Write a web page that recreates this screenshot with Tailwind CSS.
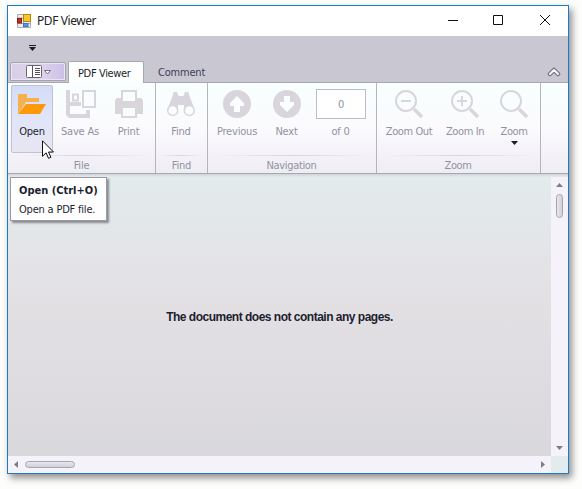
<!DOCTYPE html>
<html lang="en">
<head>
<meta charset="utf-8">
<title>PDF Viewer</title>
<script src="https://cdn.jsdelivr.net/npm/@tailwindcss/browser@4"></script>
</head>
<body class="w-[582px] h-[489px] overflow-hidden bg-[#fdfefc] font-['DejaVu_Sans_Condensed','DejaVu_Sans',sans-serif] text-[11px] leading-[14px] tracking-[-0.2px] text-[#1d1e30]">
<main class="relative ml-[7px] mt-[5px] w-[562px] h-[469px] border border-[#1c7acb] bg-[#c9c7d2] shadow-[3px_4px_7px_#00000070] flex flex-col">
  <!-- Title bar -->
  <header class="h-[30px] shrink-0 bg-[#fefffe] flex items-center pl-[9px]">
    <svg class="w-[14px] h-[14px] shrink-0" viewBox="0 0 14 14"><path d="M.5.5h13v13H.5zM6.500.5v13M.5 4h6M.5 9.500h13" fill="#eee" stroke="#aaa"/><rect x="6.500" y=".5" width="7" height="7" fill="#f7c52c" stroke="#b8860b"/><rect x=".5" y="4.500" width="4" height="4.500" fill="#c42b22" stroke="#8e1d15"/><rect x="6.500" y="9.500" width="4.500" height="3" fill="#5897ed" stroke="#3475cf"/></svg>
    <h1 class="ml-[6px] text-[12px] leading-[16px] font-['Noto_Sans',sans-serif] font-normal tracking-[-0.42px] text-[#222]">PDF Viewer</h1>
    <svg class="ml-auto mr-[17px] -mt-[2px] w-[104px] h-[12px] shrink-0" viewBox="0 0 104 12" fill="none" stroke="#111"><path d="M1 6.500h10M46.500 1.500h9v9h-9zM93 1l10 10M103 1L93 11"/></svg>
  </header>
  <!-- Quick access toolbar -->
  <div class="h-[25px] shrink-0 flex items-start pl-[21px] pt-[9px]">
    <svg class="w-[7px] h-[6px]" viewBox="0 0 7 6" fill="#1b1b2b"><path d="M0 0h7v1H0zM0 2h7L3.500 6z"/></svg>
  </div>
  <!-- Tabs -->
  <nav class="h-[22px] shrink-0 border-b border-[#a8a6b1] flex items-end">
    <div class="ml-[2px] mb-px w-[56px] h-[19px] border border-[#a7a1b5] rounded-t-[2px] bg-linear-to-r from-[#d8cee5] via-[#e1d6ed] to-[#ccbfe8] shadow-[inset_0_0_0_1px_#eae5f2] flex items-center pl-[15px]">
      <svg class="w-[26px] h-[13px]" viewBox="0 0 26 13" fill="none"><rect x=".5" y=".5" width="15" height="12" rx="1" fill="#fff" stroke="#68656f"/><path d="M6.500 1v11M9 3.500h5M9 5.500h5M9 7.500h5M9 9.500h5" stroke="#55515e"/><path d="M18.500 5.500h6l-3 3.500z" fill="#fff" stroke="#77728a"/></svg>
    </div>
    <div class="ml-[2px] -mb-px w-[76px] h-[22px] border border-b-0 border-[#a8a6b1] rounded-t-[2px] bg-[#fdfefe] flex items-center pl-[9px] pt-[2px]"><span class="tracking-[-0.35px] whitespace-nowrap">PDF Viewer</span></div>
    <div class="w-[74px] h-[21px] flex items-center pl-[14px] pt-[3px] text-[#3f4054]"><span class="tracking-[-0.2px]">Comment</span></div>
    <svg class="ml-auto mr-[7px] mb-[5px] w-[14px] h-[10px]" viewBox="0 0 14 10" fill="none" stroke-linecap="round" stroke-linejoin="round"><path d="M3 7l4-4 4 4" stroke="#777483" stroke-width="4.500"/><path d="M3 7l4-4 4 4" stroke="#fafafc" stroke-width="2"/></svg>
  </nav>
  <!-- Ribbon -->
  <section class="h-[91px] shrink-0 border-b border-[#a8a8b0] bg-linear-to-b from-[#f8ffff] via-[#fbfafd] to-[#efedf4] flex text-[#92929f]">
    <div class="w-[148px] border-r border-[#b6b5be] flex flex-col pl-[3px]">
      <div class="h-[72px] flex pt-[2px]">
        <button class="w-[42px] h-[68px] rounded-[2px] border border-[#c1c1d1] bg-linear-to-b from-[#d4dcf6] via-[#e1e5f9] to-[#e7e6f2] flex flex-col items-center pt-[4px] text-[#1d1e30]">
          <svg class="w-[28px] h-[28px] shrink-0" viewBox="0 0 28 28"><path d="M0 24V4h9v4h12v4H8z" fill="#f6b04d"/><path d="M8 14h20l-6 10H0z" fill="#fe9a07"/></svg>
          <span class="mt-[7px]">Open</span>
        </button>
        <button class="w-[54px] flex flex-col items-center pt-[5px]">
          <svg class="ml-px w-[30px] h-[28px] shrink-0" viewBox="0 0 30 28" fill="none"><path d="M0 0h4v12h11v4H4v8h16v-4h4v8H3l-3-3z" fill="#d8d6dc"/><path d="M7 4.500h5v6H7z" stroke="#d8d6dc" stroke-width="2"/><path d="M17 1h12v16H17z" stroke="#d8d6dc" stroke-width="2"/></svg>
          <span class="mt-[7px] whitespace-nowrap">Save As</span>
        </button>
        <button class="w-[43px] flex flex-col items-center pt-[5px]">
          <svg class="w-[28px] h-[28px] shrink-0" viewBox="0 0 28 28"><path d="M2 8h24l2 2v14h-6v-6H6v6H0V10z" fill="#d8d6dc"/><path d="M7 12V1h14v11zM7 17h14v10H7z" fill="#fbfdfd" stroke="#d8d6dc" stroke-width="2"/></svg>
          <span class="mt-[7px]">Print</span>
        </button>
      </div>
      <div class="h-px mx-1 bg-linear-to-r from-transparent via-[#d7d5de] to-transparent"></div>
      <div class="text-center pt-[3px] pr-[3px]">File</div>
    </div>
    <div class="w-[52px] border-r border-[#b6b5be] flex flex-col">
      <button class="h-[72px] pr-px flex flex-col items-center pt-[7px]">
        <svg class="w-[28px] h-[28px] shrink-0" viewBox="0 0 28 28"><path d="M.5 19L6 5V3l1-1h3l1.500 4h5L18 2h3l1 1v2l5.500 14-10.500 2v-6h-6v6z" fill="#d8d6dc"/><g fill="#fbfdfd" stroke="#d8d6dc" stroke-width="1.500"><circle cx="5.700" cy="20.500" r="5"/><circle cx="22.300" cy="20.500" r="5"/></g></svg>
        <span class="mt-[7px]">Find</span>
      </button>
      <div class="h-px mx-1 bg-linear-to-r from-transparent via-[#d7d5de] to-transparent"></div>
      <div class="text-center pt-[3px]">Find</div>
    </div>
    <div class="w-[169px] border-r border-[#b6b5be] flex flex-col pl-[2px]">
      <div class="h-[72px] flex pt-[2px]">
        <button class="w-[54px] flex flex-col items-center pt-[5px]">
          <svg class="w-[28px] h-[28px] shrink-0" viewBox="0 0 28 28"><circle cx="14" cy="14" r="14" fill="#d8d6dc"/><path d="M14 6l7 7v3h-4v6h-6v-6H7v-3z" fill="#fafeff"/></svg>
          <span class="mt-[7px]">Previous</span>
        </button>
        <button class="w-[45px] flex flex-col items-center pt-[5px]">
          <svg class="ml-px w-[28px] h-[28px] shrink-0" viewBox="0 0 28 28"><circle cx="14" cy="14" r="14" fill="#d8d6dc"/><path d="M14 22l7-7v-3h-4V6h-6v6H7v3z" fill="#fafeff"/></svg>
          <span class="mt-[7px]">Next</span>
        </button>
        <div class="w-[64px] flex flex-col items-center pt-[4px]">
          <div class="w-[50px] h-[30px] shrink-0 border border-[#bebdc7] bg-white flex items-center justify-center pt-px">0</div>
          <span class="mt-[6px] pr-px">of 0</span>
        </div>
      </div>
      <div class="h-px mx-1 bg-linear-to-r from-transparent via-[#d7d5de] to-transparent"></div>
      <div class="text-center pt-[3px] pr-[3px] tracking-[-0.35px]">Navigation</div>
    </div>
    <div class="w-[164px] border-r border-[#b6b5be] flex flex-col pl-[3px]">
      <div class="h-[72px] flex pt-[2px]">
        <button class="w-[58px] flex flex-col items-center pt-[5px]">
          <svg class="w-[28px] h-[28px] shrink-0" viewBox="0 0 28 28" fill="none" stroke="#d8d6dc"><circle cx="11" cy="11" r="10" stroke-width="2"/><path d="M19 19l8 8" stroke-width="3.500"/><path d="M6 11h10" stroke-width="2"/></svg>
          <span class="mt-[7px] whitespace-nowrap tracking-[-0.4px]">Zoom Out</span>
        </button>
        <button class="w-[54px] flex flex-col items-center pt-[5px]">
          <svg class="w-[28px] h-[28px] shrink-0" viewBox="0 0 28 28" fill="none" stroke="#d8d6dc"><circle cx="11" cy="11" r="10" stroke-width="2"/><path d="M19 19l8 8" stroke-width="3.500"/><path d="M6 11h10M11 6v10" stroke-width="2"/></svg>
          <span class="mt-[7px] whitespace-nowrap tracking-[-0.4px]">Zoom In</span>
        </button>
        <button class="w-[44px] flex flex-col items-center pt-[5px]">
          <svg class="w-[28px] h-[28px] shrink-0" viewBox="0 0 28 28" fill="none" stroke="#d8d6dc"><circle cx="11" cy="11" r="10" stroke-width="2"/><path d="M19 19l8 8" stroke-width="3.500"/></svg>
          <span class="mt-[7px] tracking-[-0.4px]">Zoom</span>
          <svg class="mt-[2px] w-[7px] h-[4px] shrink-0" viewBox="0 0 7 4"><path d="M0 0h7L3.500 4z" fill="#1b1b2b"/></svg>
        </button>
      </div>
      <div class="h-px mx-1 bg-linear-to-r from-transparent via-[#d7d5de] to-transparent"></div>
      <div class="text-center pt-[3px] pr-[4px] tracking-[-0.4px]">Zoom</div>
    </div>
  </section>
  <div class="h-[3px] shrink-0 bg-linear-to-b from-[#cfd3d6] to-[#e4ebed]"></div>
  <!-- Document area -->
  <section class="grow min-h-0 flex">
    <div class="w-[543px] bg-linear-to-b from-[#e3ebed] via-[#e3e0e4] via-45% to-[#d9d8dd] flex justify-center">
      <p class="mt-[133px] text-[12px] leading-[14px] font-bold font-['Liberation_Sans',sans-serif] tracking-[-0.5px] whitespace-nowrap">The document does not contain any pages.</p>
    </div>
    <div class="w-[17px] bg-[#f5f3f9] flex flex-col items-center">
      <svg class="mt-[6px] w-[7px] h-[4px] shrink-0" viewBox="0 0 7 4"><path d="M0 4h7L3.500 0z" fill="#7d7c89"/></svg>
      <div class="mt-[7px] w-[7px] h-[24px] rounded-full border border-[#a6a5af] bg-linear-to-r from-[#e8e7ec] to-[#d1d0d7]"></div>
      <svg class="mt-auto mb-[6px] w-[7px] h-[4px] shrink-0" viewBox="0 0 7 4"><path d="M0 0h7L3.500 4z" fill="#7d7c89"/></svg>
    </div>
  </section>
  <div class="h-[17px] shrink-0 bg-[#e3ebed] flex">
    <div class="w-[543px] bg-[#f5f3f9] flex items-center">
      <svg class="ml-[6px] w-[4px] h-[7px] shrink-0" viewBox="0 0 4 7"><path d="M4 0v7L0 3.500z" fill="#7d7c89"/></svg>
      <div class="ml-[7px] w-[50px] h-[7px] rounded-full border border-[#a6a5af] bg-linear-to-b from-[#e8e7ec] to-[#d1d0d7]"></div>
      <svg class="ml-auto mr-[6px] w-[4px] h-[7px] shrink-0" viewBox="0 0 4 7"><path d="M0 0v7L4 3.500z" fill="#7d7c89"/></svg>
    </div>
  </div>
  <!-- Tooltip and pointer -->
  <aside class="absolute left-[2px] top-[171px] w-[97px] h-[44px] border border-[#9a9aa6] bg-[#fdfefd] shadow-[2px_2px_2px_#00000066] pl-[8px] pt-[5px] whitespace-nowrap">
    <strong class="block leading-[15px] tracking-normal">Open (Ctrl+O)</strong>
    <p class="mt-[5px]">Open a PDF file.</p>
  </aside>
  <svg class="absolute left-[34px] top-[134px] w-[12px] h-[19px]" viewBox="0 0 12 19"><path d="M.5.8v15.500l3.600-3.500 2.400 5.500 2.400-1-2.400-5.300h5z" fill="#fff" stroke="#111"/></svg>
</main>
</body>
</html>
